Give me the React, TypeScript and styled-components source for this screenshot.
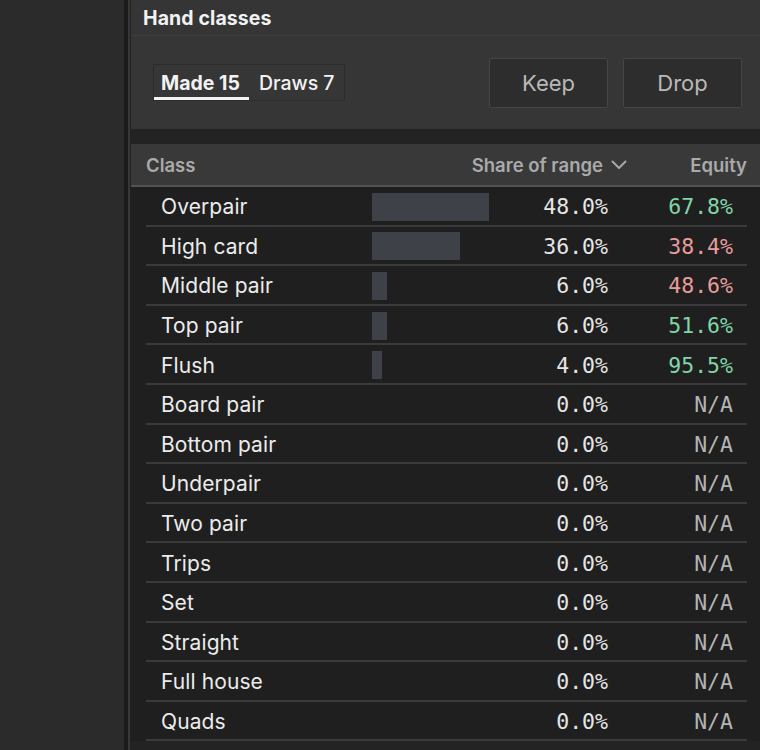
import React, { useState } from 'react';
import styled, { createGlobalStyle } from 'styled-components';

const GlobalStyle = createGlobalStyle`
  html, body {
    margin: 0;
    padding: 0;
    background: #2b2b2b;
    font-family: Inter, "Noto Sans", sans-serif;
    -webkit-font-smoothing: antialiased;
  }
  * { box-sizing: border-box; }
`;

const Shell = styled.div`
  display: flex;
  height: 750px;
  overflow: hidden;
`;

const Sidebar = styled.div`
  width: 128px;
  flex-shrink: 0;
  background: #2b2b2b;
  border-right: 4px solid #1b1b1b;
`;

/* light edge, then a 1px dark seam shown through the padding */
const Panel = styled.div`
  flex: 1;
  display: flex;
  flex-direction: column;
  border-left: 2px solid #383838;
  padding-left: 1px;
  background: #212121;
  min-width: 0;
`;

const PanelTitle = styled.div`
  height: 36px;
  padding: 1px 12px 0;
  display: flex;
  align-items: center;
  background: #353535;
  border-bottom: 1px solid #3d3d3d;
  color: #f2f2f2;
  font-size: 19.5px;
  font-weight: 700;
  letter-spacing: 0.1px;
`;

const Toolbar = styled.div`
  height: 93px;
  padding: 0 18px 0 22px;
  display: flex;
  align-items: center;
  justify-content: space-between;
  background: #363636;
`;

const TabGroup = styled.div`
  display: flex;
  height: 37px;
  border: 1px solid #2c2c2c;
`;

const Tab = styled.button<{ $active: boolean }>`
  height: 100%;
  padding: 3px 9px 0 7px;
  background: none;
  border: none;
  border-bottom: 3px solid ${(p) => (p.$active ? '#f4f4f4' : 'transparent')};
  color: #f2f2f2;
  font-family: inherit;
  font-size: 19.5px;
  font-weight: ${(p) => (p.$active ? 700 : 500)};
  cursor: pointer;
  & + & {
    padding: 3px 9px 0 10px;
  }
`;

const Actions = styled.div`
  display: flex;
  gap: 15px;
`;

const ActionButton = styled.button`
  width: 119px;
  height: 50px;
  background: #2d2d2d;
  border: 1px solid #454545;
  border-radius: 2px;
  color: #b9b9b9;
  font-family: inherit;
  font-size: 22px;
  cursor: pointer;
`;

const Gap = styled.div`
  height: 15px;
  background: #232323;
`;

const TableHead = styled.div`
  height: 43px;
  padding: 0 13px 0 15px;
  display: grid;
  grid-template-columns: 1fr auto 120px;
  align-items: center;
  background: #393939;
  border-bottom: 2px solid #525252;
  color: #aaaaaa;
  font-size: 18.5px;
  font-weight: 600;
`;

const HeadCell = styled.div<{ $right?: boolean }>`
  display: flex;
  align-items: center;
  gap: 8px;
  justify-content: ${(p) => (p.$right ? 'flex-end' : 'flex-start')};
`;

const Body = styled.div`
  background: #1f1f1f;
  padding: 0 13px 0 15px;
`;

const Row = styled.div`
  height: 39.6px;
  display: grid;
  grid-template-columns: 211px 120px 116px 125px;
  align-items: center;
  padding: 2px 14px 0 15px;
  border-bottom: 2px solid #3a3a3a;
`;

const Label = styled.div`
  color: #ececec;
  font-size: 21px;
  letter-spacing: 0.1px;
  white-space: nowrap;
`;

const BarCell = styled.div`
  height: 28px;
  display: flex;
  align-items: center;
`;

const Bar = styled.div`
  height: 28px;
  background: #3e4148;
`;

const Num = styled.div<{ $tone?: 'good' | 'bad' | 'none' }>`
  text-align: right;
  font-family: "DejaVu Sans Mono", "Liberation Mono", monospace;
  font-size: 21.5px;
  color: ${(p) =>
    p.$tone === 'good' ? '#80d6a8' : p.$tone === 'bad' ? '#e89c9c' : p.$tone === 'none' ? '#b4b4b4' : '#e6e6e6'};
`;

const Footer = styled.div`
  flex: 1;
  background: #232323;
`;

interface HandClass {
  name: string;
  share: number;
  equity: number | null;
}

const made: HandClass[] = [
  { name: 'Overpair', share: 48.0, equity: 67.8 },
  { name: 'High card', share: 36.0, equity: 38.4 },
  { name: 'Middle pair', share: 6.0, equity: 48.6 },
  { name: 'Top pair', share: 6.0, equity: 51.6 },
  { name: 'Flush', share: 4.0, equity: 95.5 },
  { name: 'Board pair', share: 0, equity: null },
  { name: 'Bottom pair', share: 0, equity: null },
  { name: 'Underpair', share: 0, equity: null },
  { name: 'Two pair', share: 0, equity: null },
  { name: 'Trips', share: 0, equity: null },
  { name: 'Set', share: 0, equity: null },
  { name: 'Straight', share: 0, equity: null },
  { name: 'Full house', share: 0, equity: null },
  { name: 'Quads', share: 0, equity: null },
];

function Chevron() {
  return (
    <svg width="16" height="10" viewBox="0 0 16 10" fill="none">
      <polyline points="1.5,1.5 8,8 14.5,1.5" stroke="#a8a8a8" strokeWidth="2" strokeLinecap="round" strokeLinejoin="round" />
    </svg>
  );
}

export default function App() {
  const [tab, setTab] = useState<'made' | 'draws'>('made');

  return (
    <Shell>
      <GlobalStyle />
      <Sidebar />
      <Panel>
        <PanelTitle>Hand classes</PanelTitle>
        <Toolbar>
          <TabGroup>
            <Tab $active={tab === 'made'} onClick={() => setTab('made')}>Made 15</Tab>
            <Tab $active={tab === 'draws'} onClick={() => setTab('draws')}>Draws 7</Tab>
          </TabGroup>
          <Actions>
            <ActionButton>Keep</ActionButton>
            <ActionButton>Drop</ActionButton>
          </Actions>
        </Toolbar>
        <Gap />
        <TableHead>
          <HeadCell>Class</HeadCell>
          <HeadCell $right>
            Share of range <Chevron />
          </HeadCell>
          <HeadCell $right>Equity</HeadCell>
        </TableHead>
        <Body>
          {made.map((h) => (
            <Row key={h.name}>
              <Label>{h.name}</Label>
              <BarCell>
                {h.share > 0 && <Bar style={{ width: `${h.share * 2.44}px` }} />}
              </BarCell>
              <Num>{h.share.toFixed(1)}%</Num>
              <Num $tone={h.equity === null ? 'none' : h.equity >= 50 ? 'good' : 'bad'}>
                {h.equity === null ? 'N/A' : `${h.equity.toFixed(1)}%`}
              </Num>
            </Row>
          ))}
        </Body>
        <Footer />
      </Panel>
    </Shell>
  );
}
